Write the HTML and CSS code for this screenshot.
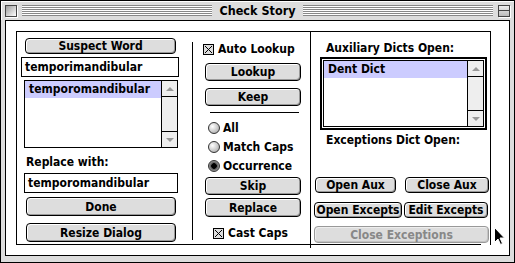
FILE: index.html
```html
<!DOCTYPE html>
<html>
  <head>
    <title>Check Story</title>
    <meta charset="utf-8">
    <link rel="stylesheet" href="styles.css">
  </head>
  <body>
    <div class="window">
      <div class="titlebar">
        <span class="closebox"></span>
        <span class="stripes"></span>
        <span class="title">Check Story</span>
        <span class="stripes"></span>
        <span class="shadebox"></span>
      </div>
      <div class="frame">
        <div class="content">
          <div class="group">

            <!-- left: suspect word / replacement -->
            <div class="col col-left">
              <div class="btn btn-suspect">Suspect Word</div>
              <div class="field field-suspect">temporimandibular</div>
              <div class="list list-suggest">
                <div class="list-items">
                  <div class="list-row selected">temporomandibular</div>
                </div>
                <div class="scrollbar">
                  <span class="arrow up"></span>
                  <span class="track"></span>
                  <span class="arrow down"></span>
                </div>
              </div>
              <div class="label label-replace">Replace with:</div>
              <div class="field field-replace">temporomandibular</div>
              <div class="btn btn-done">Done</div>
              <div class="btn btn-resize">Resize Dialog</div>
            </div>

            <!-- middle: actions and options -->
            <div class="col col-mid">
              <div class="check-row auto"><span class="checkbox checked"></span>Auto Lookup</div>
              <div class="btn btn-mid btn-lookup">Lookup</div>
              <div class="btn btn-mid btn-keep">Keep</div>
              <div class="rule"></div>
              <div class="radio-row first"><span class="radio"></span>All</div>
              <div class="radio-row"><span class="radio"></span>Match Caps</div>
              <div class="radio-row"><span class="radio on"></span>Occurrence</div>
              <div class="btn btn-mid btn-skip">Skip</div>
              <div class="btn btn-mid btn-replace">Replace</div>
              <div class="check-row cast"><span class="checkbox checked"></span>Cast Caps</div>
            </div>

            <!-- right: dictionaries -->
            <div class="col col-right">
              <div class="label label-aux">Auxiliary Dicts Open:</div>
              <div class="focus-ring">
                <div class="list list-aux">
                  <div class="list-items">
                    <div class="list-row selected">Dent Dict</div>
                  </div>
                  <div class="scrollbar">
                    <span class="arrow up"></span>
                    <span class="track"></span>
                    <span class="arrow down"></span>
                  </div>
                </div>
              </div>
              <div class="label label-exc">Exceptions Dict Open:</div>
              <div class="btn-row row-aux">
                <div class="btn btn-open-aux">Open Aux</div>
                <div class="btn btn-close-aux">Close Aux</div>
              </div>
              <div class="btn-row row-exc">
                <div class="btn btn-open-exc">Open Excepts</div>
                <div class="btn btn-edit-exc">Edit Excepts</div>
              </div>
              <div class="btn disabled btn-close-exc">Close Exceptions</div>
            </div>

          </div>
        </div>
      </div>
      <svg class="cursor" width="12" height="19" viewBox="0 0 12 19">
        <path d="M0.5 0.5 L0.5 15.5 L4 12 L6.5 17.5 L8.5 16.5 L6 11 L10.5 11 Z" fill="#000" stroke="#fff" stroke-width="1"/>
      </svg>
    </div>
  </body>
</html>
```

FILE: styles.css
```css
html, body {
  margin: 0;
  background: #fff;
  font-family: "DejaVu Sans Condensed", "DejaVu Sans", sans-serif;
  font-size: 12px;
  font-weight: bold;
  color: #000;
}
.window {
  position: relative;
  width: 515px;
  height: 263px;
  box-sizing: border-box;
  border: 1px solid #000;
  background: #ddd;
  display: flex;
  flex-direction: column;
  overflow: hidden;
}

/* -- title bar -- */
.titlebar {
  height: 19px;
  display: flex;
  align-items: center;
  padding: 0 4px;
  box-shadow: inset 1px 1px 0 #fff;
}
.closebox, .shadebox {
  width: 10px;
  height: 10px;
  border: 1px solid #444;
  background: linear-gradient(135deg, #999, #fff);
  box-shadow: 1px 1px 0 #fff;
  flex: none;
}
.shadebox {
  background: linear-gradient(#eee, #bbb);
  position: relative;
}
.shadebox:after {
  content: "";
  position: absolute;
  left: 0;
  right: 0;
  top: 4px;
  height: 1px;
  background: #444;
}
.stripes {
  flex: 1;
  height: 11px;
  margin: 0 5px;
  background: repeating-linear-gradient(#888 0 1px, #fff 1px 2px);
}
.title {
  font-size: 12.5px;
  padding: 0 2px;
}

/* -- frame -- */
.frame {
  flex: 1;
  padding: 0 4px 6px 4px;
  display: flex;
}
.content {
  flex: 1;
  border: 1px solid #000;
  background: #fff;
  padding: 10px 0 0 10px;
}
.group {
  position: relative;
  width: 475px;
  height: 214px;
  box-sizing: border-box;
  border: 1px solid #000;
  border-bottom: none;
  display: grid;
  grid-template-columns: 175px 118px 180px;
}
.group:after {
  content: "";
  position: absolute;
  left: -1px;
  bottom: 0;
  width: 465px;
  height: 1px;
  background: #000;
}
.col {
  display: flex;
  flex-direction: column;
  align-items: flex-start;
}

/* -- shared controls -- */
.btn {
  box-sizing: border-box;
  border: 1px solid #000;
  border-radius: 4px;
  background: #ddd;
  box-shadow: inset 1px 1px 0 #fff, inset -1px -1px 0 #999;
  display: flex;
  align-items: center;
  justify-content: center;
  white-space: nowrap;
}
.btn.disabled {
  border-color: #999;
  color: #888;
  box-shadow: inset 1px 1px 0 #eee, inset -1px -1px 0 #c4c4c4;
}
.field {
  box-sizing: border-box;
  border: 1px solid #000;
  height: 20px;
  padding-left: 3px;
  display: flex;
  align-items: center;
}
.label {
  height: 14px;
  line-height: 14px;
}
.list {
  box-sizing: border-box;
  border: 1px solid #000;
  display: flex;
}
.list-items {
  flex: 1;
}
.list-row {
  height: 17px;
  line-height: 17px;
  padding-left: 4px;
}
.list-row.selected {
  background: #ccf;
}
.scrollbar {
  width: 15px;
  border-left: 1px solid #000;
  background: #eee;
  display: flex;
  flex-direction: column;
}
.scrollbar .track {
  flex: 1;
  border-top: 1px solid #000;
  border-bottom: 1px solid #000;
}
.scrollbar .arrow {
  height: 15px;
  display: flex;
  align-items: center;
  justify-content: center;
}
.arrow.up:before, .arrow.down:before {
  content: "";
  border-left: 4px solid transparent;
  border-right: 4px solid transparent;
}
.arrow.up:before {
  border-bottom: 4px solid #999;
}
.arrow.down:before {
  border-top: 4px solid #999;
}
.checkbox {
  width: 9px;
  height: 9px;
  border: 1px solid #000;
  margin-right: 4px;
  flex: none;
  position: relative;
  background: #eee;
}
.checkbox.checked {
  background:
    linear-gradient(45deg, transparent 44%, #000 44% 56%, transparent 56%),
    linear-gradient(-45deg, transparent 44%, #000 44% 56%, transparent 56%),
    #ddd;
  background-size: 7px 7px;
  background-position: center;
  background-repeat: no-repeat;
}
.radio {
  width: 10px;
  height: 10px;
  border: 1px solid #333;
  border-radius: 50%;
  background: radial-gradient(circle at 35% 35%, #fff, #bbb 70%, #888);
  margin-right: 3px;
  flex: none;
}
.radio.on {
  background: radial-gradient(circle at 50% 50%, #000 0 2.5px, #555 3px, #999 5px);
}
.check-row, .radio-row {
  display: flex;
  align-items: center;
  white-space: nowrap;
}

/* -- left column -- */
.col-left {
  padding-top: 6px;
}
.btn-suspect {
  height: 16px;
  width: 151px;
  margin-left: 8px;
}
.field-suspect {
  margin: 3px 0 0 4px;
  width: 158px;
}
.list-suggest {
  margin: 3px 0 0 7px;
  width: 154px;
  height: 68px;
}
.label-replace {
  margin: 7px 0 0 9px;
}
.field-replace {
  margin: 4px 0 0 7px;
  width: 154px;
}
.btn-done, .btn-resize {
  width: 150px;
  height: 19px;
  margin-left: 9px;
}
.btn-done {
  margin-top: 4px;
}
.btn-resize {
  margin-top: 7px;
}

/* -- middle column -- */
.col-mid {
  border-left: 1px solid #000;
  margin: 10px 0 8px 0;
}
.check-row.auto {
  height: 14px;
  margin-left: 10px;
}
.btn-mid {
  width: 96px;
  height: 18px;
  margin-left: 12px;
}
.btn-lookup {
  margin-top: 7px;
}
.btn-keep {
  margin-top: 7px;
}
.rule {
  width: 89px;
  height: 1px;
  background: #000;
  margin: 6px 0 0 17px;
}
.radio-row {
  height: 19px;
  margin-left: 15px;
}
.radio-row.first {
  margin-top: 5px;
}
.btn-skip {
  margin-top: 2px;
}
.btn-replace {
  margin-top: 3px;
  height: 19px;
}
.check-row.cast {
  height: 14px;
  margin: 9px 0 0 20px;
}

/* -- right column -- */
.col-right {
  border-left: 1px solid #000;
}
.label-aux {
  margin: 9px 0 0 15px;
}
.focus-ring {
  margin: 2px 0 0 9px;
  width: 167px;
  height: 73px;
  box-sizing: border-box;
  border: 2px solid #000;
  padding: 1px;
  display: flex;
}
.list-aux {
  flex: 1;
}
.label-exc {
  margin: 3px 0 0 15px;
}
.btn-row {
  display: flex;
}
.row-aux {
  margin: 30px 0 0 4px;
  gap: 9px;
}
.row-aux .btn {
  height: 16px;
}
.btn-open-aux {
  width: 81px;
}
.btn-close-aux {
  width: 84px;
}
.row-exc {
  margin: 9px 0 0 3px;
  gap: 2px;
}
.row-exc .btn {
  height: 16px;
}
.btn-open-exc {
  width: 88px;
}
.btn-edit-exc {
  width: 84px;
}
.btn-close-exc {
  margin: 8px 0 0 3px;
  width: 175px;
  height: 17px;
}

/* mouse pointer over the dialog */
.cursor {
  position: absolute;
  left: 493px;
  top: 226px;
}
```
